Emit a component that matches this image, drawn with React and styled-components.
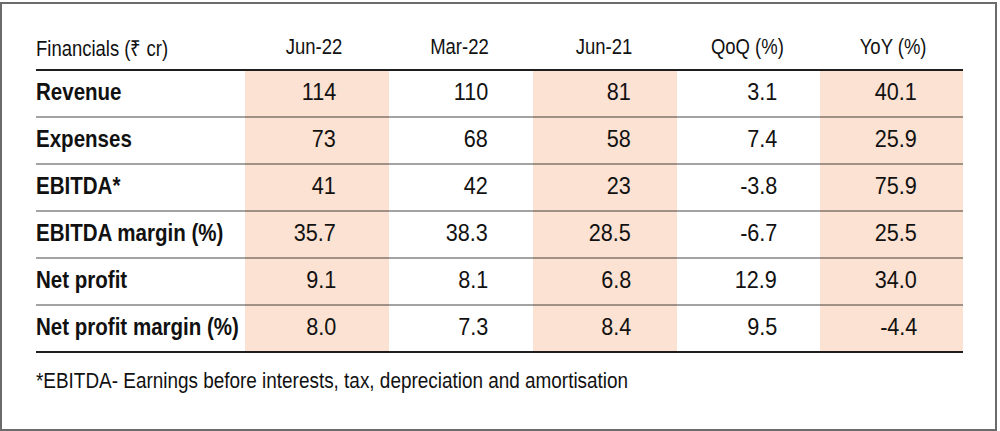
import React from "react";
import styled, { createGlobalStyle } from "styled-components";

const Global = createGlobalStyle`
  html, body { margin: 0; padding: 0; background: #fff; }
  body { font-family: "Liberation Sans", Arial, Helvetica, sans-serif; color: #111; }
`;

const Frame = styled.div`
  box-sizing: border-box;
  margin-top: 2px;
  width: 997px;
  height: 429px;
  border: 2px solid #6b6b6b;
  padding: 21px 0 0 34px;
`;

const Table = styled.div`
  width: 927px;
`;

const Row = styled.div`
  display: grid;
  grid-template-columns: 209px 144px 144px 144px 143px 143px;
`;

const HeadCell = styled.div`
  height: 44px;
  display: flex;
  align-items: center;
  justify-content: ${(p) => (p.$first ? "flex-start" : "flex-end")};
  padding-right: ${(p) => p.$pad || 0}px;
  border-bottom: 2px solid #1e1e1e;
  font-size: 22px;
  font-weight: 400;
  white-space: nowrap;
`;

const Cell = styled.div`
  box-sizing: border-box;
  height: 47px;
  padding-bottom: 3px;
  display: flex;
  align-items: center;
  justify-content: ${(p) => (p.$first ? "flex-start" : "flex-end")};
  padding-right: ${(p) => p.$pad || 0}px;
  background: ${(p) => (p.$shade ? "#fce2d2" : "transparent")};
  border-bottom: 2px solid ${(p) => (p.$last ? "rgba(0,0,0,0.88)" : "rgba(0,0,0,0.36)")};
  font-size: 24px;
  font-weight: ${(p) => (p.$first ? 700 : 400)};
  white-space: nowrap;
`;

/* condensed face emulation: the reference uses a narrow grotesque */
const Narrow = styled.span`
  display: inline-block;
  transform: scaleX(${(p) => p.$k});
  transform-origin: ${(p) => (p.$left ? "left" : "right")} center;
`;

const Note = styled.p`
  margin: 15px 0 0;
  font-size: 22px;
  line-height: 25px;
  white-space: nowrap;
`;

const cols = [
  { label: "Jun-22", head: 47, val: 53, shade: true },
  { label: "Mar-22", head: 44, val: 45, shade: false },
  { label: "Jun-21", head: 45, val: 46, shade: true },
  { label: "QoQ (%)", head: 36, val: 43, shade: false },
  { label: "YoY (%)", head: 37, val: 46, shade: true },
];

const rows = [
  ["Revenue", "114", "110", "81", "3.1", "40.1"],
  ["Expenses", "73", "68", "58", "7.4", "25.9"],
  ["EBITDA*", "41", "42", "23", "-3.8", "75.9"],
  ["EBITDA margin (%)", "35.7", "38.3", "28.5", "-6.7", "25.5"],
  ["Net profit", "9.1", "8.1", "6.8", "12.9", "34.0"],
  ["Net profit margin (%)", "8.0", "7.3", "8.4", "9.5", "-4.4"],
];

export default function App() {
  return (
    <>
      <Global />
      <Frame>
        <Table>
          <Row>
            <HeadCell $first>
              <Narrow $k={0.84} $left>Financials (₹ cr)</Narrow>
            </HeadCell>
            {cols.map((c) => (
              <HeadCell key={c.label} $pad={c.head}>
                <Narrow $k={0.84}>{c.label}</Narrow>
              </HeadCell>
            ))}
          </Row>
          {rows.map((r, i) => (
            <Row key={r[0]}>
              <Cell $first $last={i === rows.length - 1}>
                <Narrow $k={0.855} $left>{r[0]}</Narrow>
              </Cell>
              {r.slice(1).map((v, j) => (
                <Cell
                  key={j}
                  $pad={cols[j].val}
                  $shade={cols[j].shade}
                  $last={i === rows.length - 1}
                >
                  <Narrow $k={0.9}>{v}</Narrow>
                </Cell>
              ))}
            </Row>
          ))}
        </Table>
        <Note>
          <Narrow $k={0.86} $left>
            *EBITDA- Earnings before interests, tax, depreciation and amortisation
          </Narrow>
        </Note>
      </Frame>
    </>
  );
}
